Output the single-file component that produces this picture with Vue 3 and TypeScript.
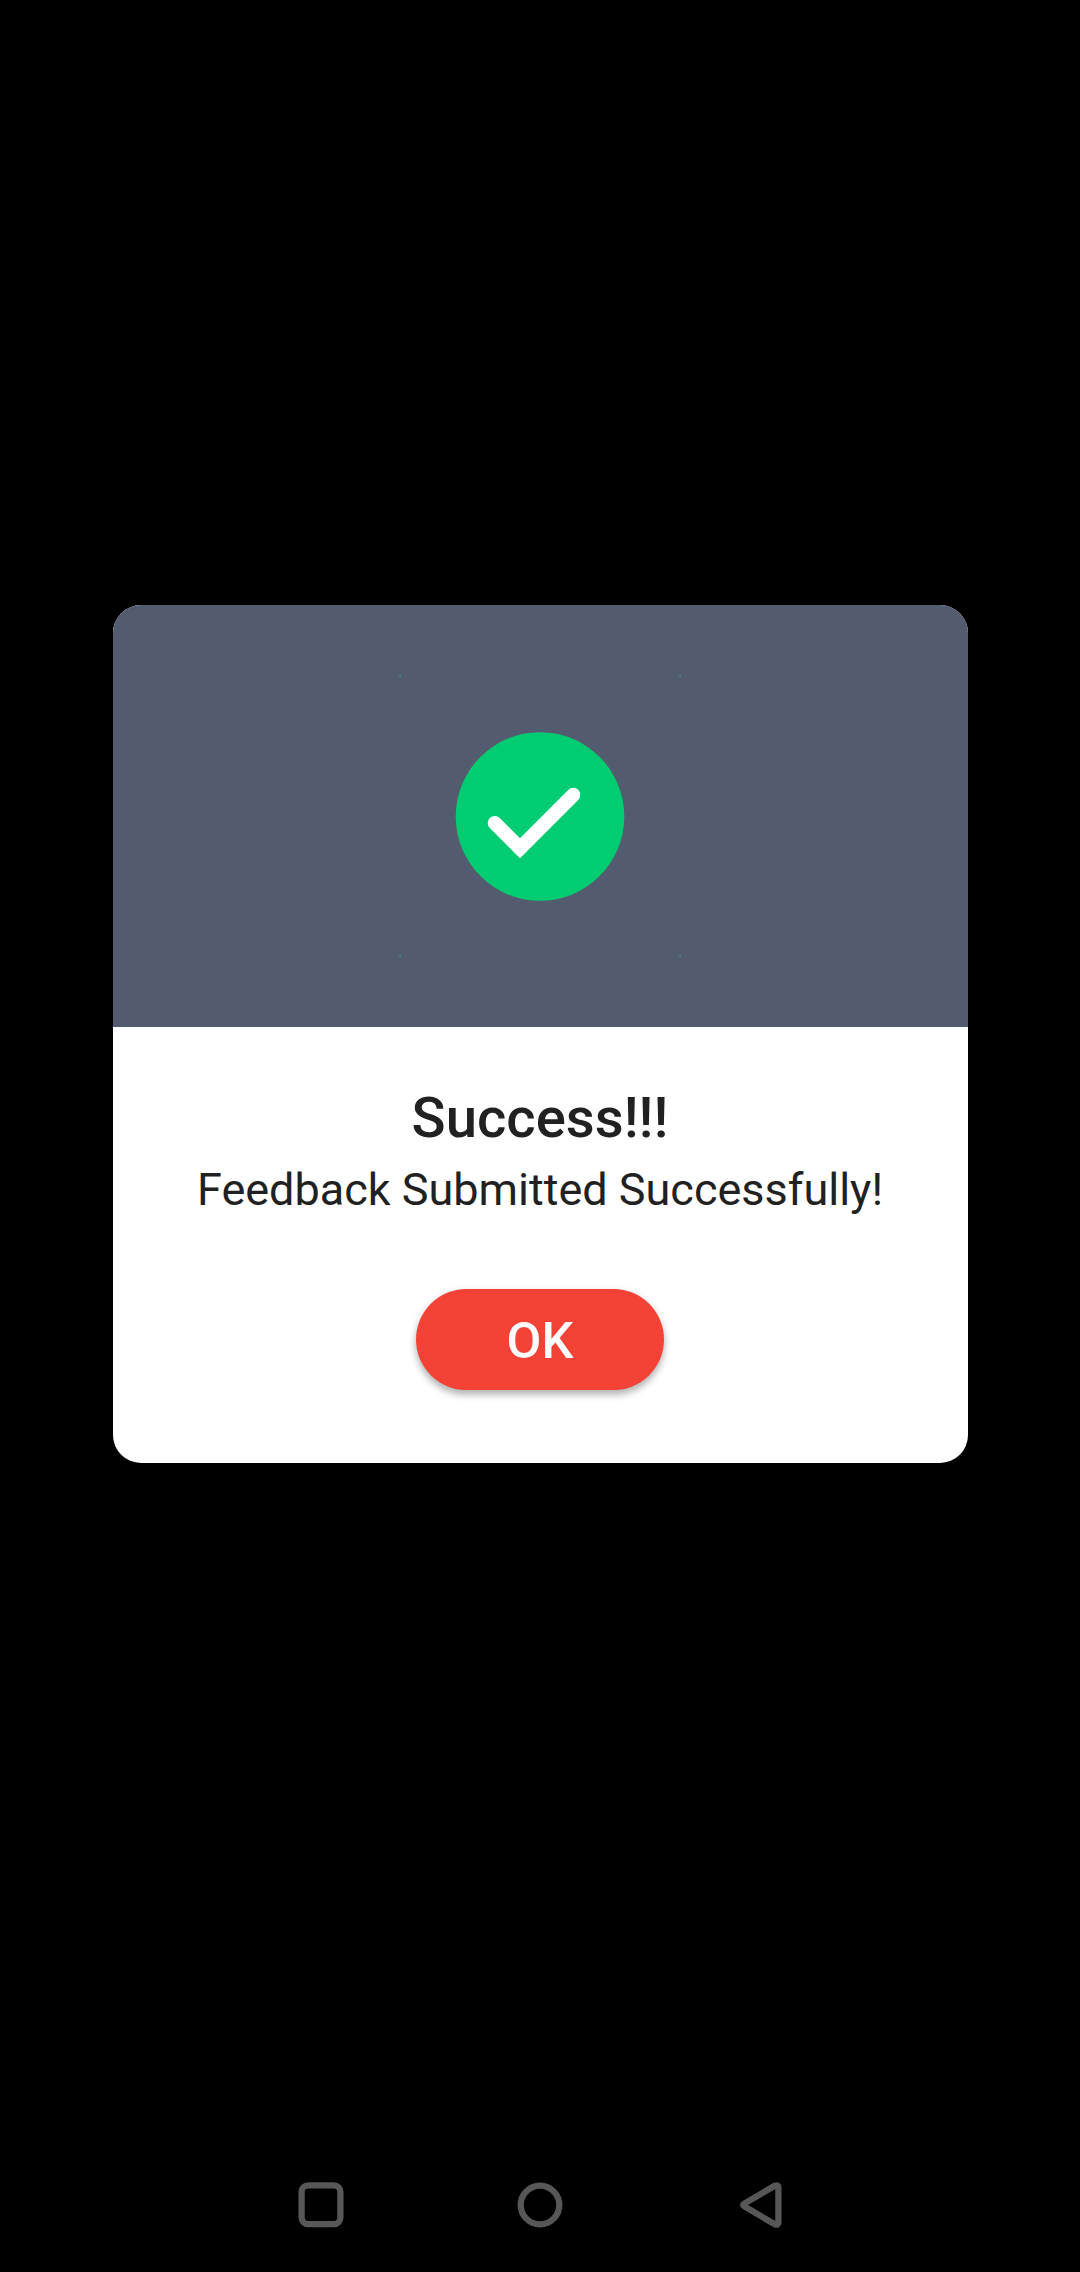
<script setup lang="ts">
const title: string = 'Success!!!'
const message: string = 'Feedback Submitted Successfully!'
const sparks: [number, number][] = [[0, 0], [280, 0], [0, 280], [280, 280]]
</script>

<template>
  <div class="screen">
    <main class="stage">
      <section class="dialog" role="dialog">
        <div class="banner">
          <svg width="284" height="284" viewBox="-2 -2 284 284">
            <circle v-for="([x, y], i) in sparks" :key="i" :cx="x + 0.2" :cy="y + 0.2" r="1" fill="#458b89" />
            <circle cx="140" cy="140.5" r="84.3" fill="#00cc71" />
            <path d="M94.8 147.1 L120 172.3 L173.2 118.9" fill="none" stroke="#fff" stroke-width="14.2" stroke-linecap="round" stroke-linejoin="miter" />
          </svg>
        </div>
        <div class="content">
          <h1 class="title">{{ title }}</h1>
          <p class="message">{{ message }}</p>
          <button class="ok" type="button">OK</button>
        </div>
      </section>
    </main>
    <nav class="navbar">
      <svg width="48" height="48" viewBox="0 0 48 48"><rect x="4.6" y="4.3" width="38.8" height="38.8" rx="6.5" /></svg>
      <svg width="48" height="48" viewBox="0 0 48 48"><circle cx="24" cy="24" r="19.3" /></svg>
      <svg width="48" height="48" viewBox="0 0 48 48"><path d="M9.3 22.6 L39.8 4.7 Q43.4 3.4 43.4 6.5 V41.5 Q43.4 44.6 39.8 43.3 L9.3 25.4 Q7 24 9.3 22.6 Z" /></svg>
    </nav>
  </div>
</template>

<style>
body {
  background: #000;
}
</style>

<style scoped>
.screen {
  width: 1080px;
  height: 2272px;
  display: flex;
  flex-direction: column;
  background: #000;
  font-family: Roboto, sans-serif;
  color: #212121;
}
.stage {
  flex: 1;
  display: flex;
  flex-direction: column;
  align-items: center;
  padding-top: 605px;
}
.dialog {
  width: 855px;
  height: 858px;
  border-radius: 28px;
  overflow: hidden;
  background: #fff;
}
.banner {
  height: 422px;
  display: flex;
  align-items: center;
  justify-content: center;
  background: #525c6e;
}
.content {
  display: flex;
  flex-direction: column;
  align-items: center;
  padding-top: 58px;
}
.title {
  margin: 0;
  font-size: 56.25px;
  line-height: 66px;
  font-weight: 500;
}
.message {
  margin: 5px 0 0;
  font-size: 45px;
  line-height: 68px;
  white-space: nowrap;
}
.ok {
  box-sizing: border-box;
  width: 248px;
  height: 101px;
  margin-top: 65px;
  padding: 2px 0 0;
  border: 0;
  border-radius: 51px;
  background: #f44336;
  color: #fff;
  font: 500 50.6px/60px Roboto, sans-serif;
  box-shadow: 0 5px 7px rgba(0, 0, 0, 0.24), 0 2px 10px rgba(0, 0, 0, 0.1);
}
.navbar {
  height: 134px;
  display: flex;
  align-items: center;
  justify-content: center;
  gap: 171px;
}
.navbar svg {
  fill: none;
  stroke: #575757;
  stroke-width: 6.3;
  stroke-linejoin: round;
}
</style>
